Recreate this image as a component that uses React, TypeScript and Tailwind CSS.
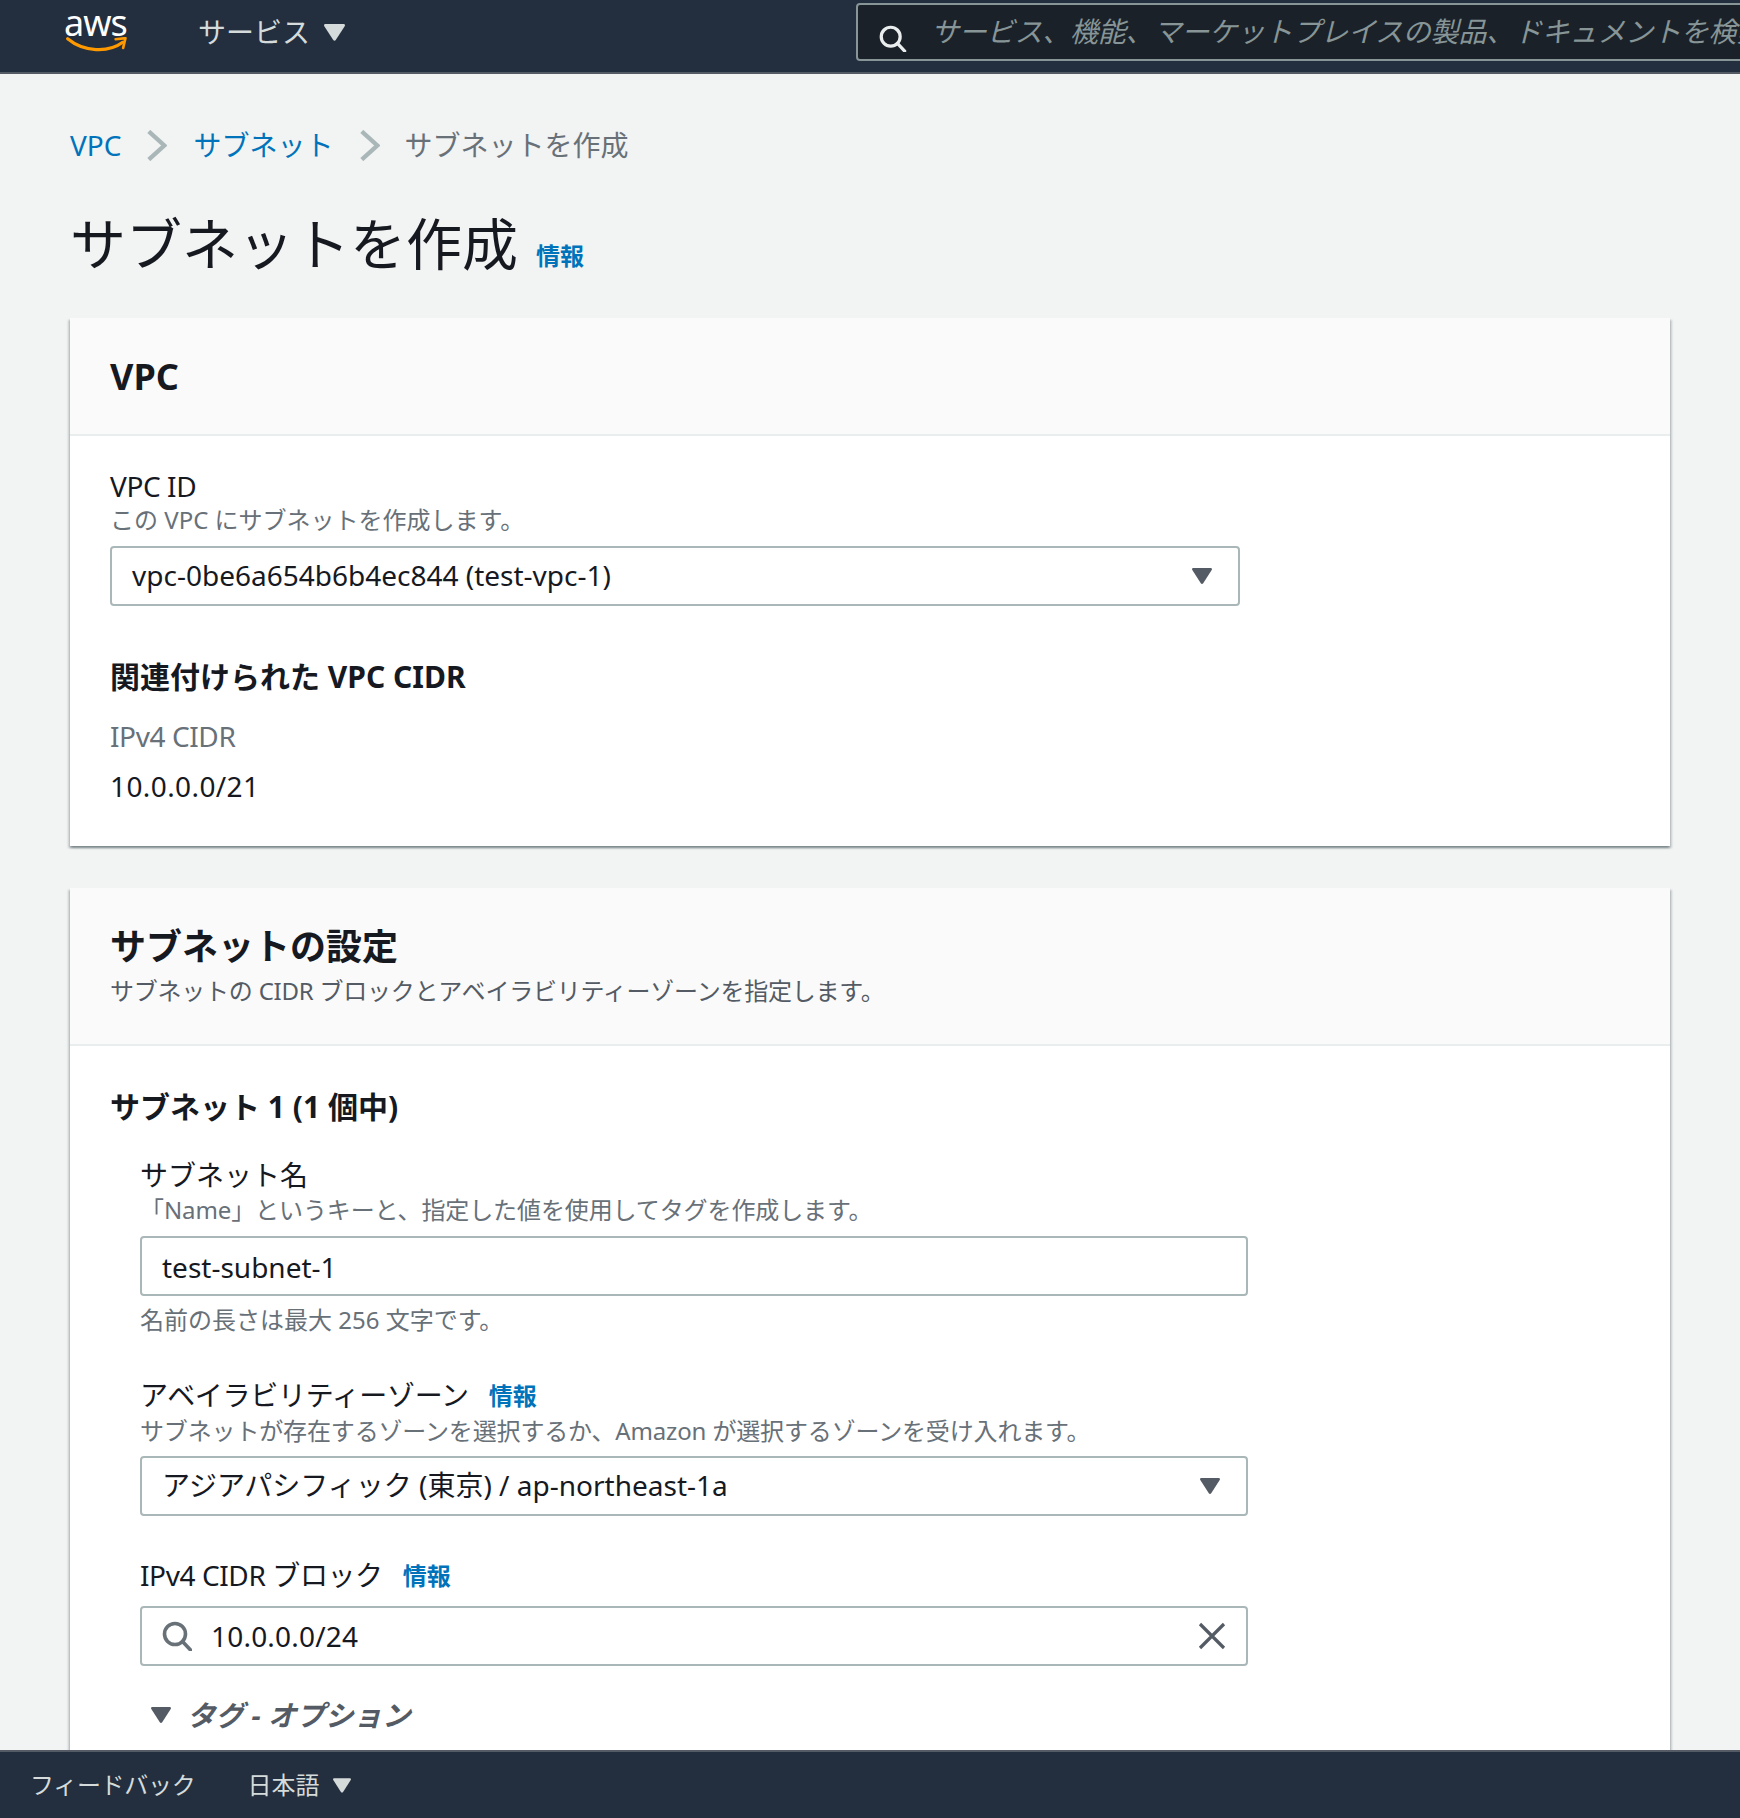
const Triangle = ({ className }: { className: string }) => (
  <svg viewBox="0 0 20 16" className={className} fill="currentColor">
    <path d="M1.5 0h17c1.2 0 1.8 1 1.2 2L11.2 15.2c-.6.9-1.8.9-2.4 0L.3 2C-.3 1 .3 0 1.5 0z" />
  </svg>
);

const Chevron = () => (
  <svg viewBox="0 0 20 32" className="h-[31px] w-[20px] text-[#aab7b8]" fill="none" stroke="currentColor" strokeWidth="4.5">
    <path d="M1.5 1.5L17.5 16 1.5 30.5" />
  </svg>
);

const SearchIcon = ({ className }: { className: string }) => (
  <svg viewBox="0 0 30 30" className={className} fill="none" stroke="currentColor" strokeWidth="3.6">
    <circle cx="13" cy="13" r="10.5" />
    <path d="M20.5 20.5L28.5 29" strokeLinecap="round" />
  </svg>
);

const Info = ({ className = "" }: { className?: string }) => (
  <a className={`text-[24px] font-bold leading-[36px] text-[#0073bb] ${className}`}>情報</a>
);

export default function App() {
  return (
    <div className="flex h-[1818px] flex-col overflow-hidden bg-[#f2f3f3] font-['Noto_Sans','Noto_Sans_CJK_JP',sans-serif] text-[28px] text-[#16191f]">
      {/* Top nav */}
      <header className="flex h-[74px] shrink-0 items-center border-b-2 border-[#545b64] bg-[#232f3e] pb-[8px]">
        <div className="relative ml-[62px] h-[64px] w-[70px] shrink-0">
          <span className="absolute left-[2px] top-[3px] text-[36px] leading-[40px] tracking-[-1px] text-white">aws</span>
          <svg viewBox="0 0 70 18" className="absolute left-0 top-[37px] h-[16px] w-[70px]" fill="none">
            <path d="M2 2c18 15 46 16 62 4" stroke="#ff9900" strokeWidth="3.6" strokeLinecap="round" />
            <path d="M56 2.5l11-1.2-2.6 11" stroke="#ff9900" strokeWidth="3" strokeLinecap="round" strokeLinejoin="round" />
          </svg>
        </div>
        <span className="ml-[66px] shrink-0 text-[#d5dbdb]">サービス</span>
        <Triangle className="ml-[14px] h-[17px] w-[21px] shrink-0 text-[#d5dbdb]" />
        <div className="ml-[511px] flex h-[58px] w-[1000px] shrink-0 items-center rounded-[4px] border-2 border-[#879596] bg-[#1a2129]">
          <SearchIcon className="ml-[20px] mt-[13px] h-[27px] w-[29px] shrink-0 text-[#eaeded]" />
          <span className="mb-[2px] ml-[24px] whitespace-nowrap italic tracking-[-0.2px] text-[#879596]">サービス、機能、マーケットプレイスの製品、ドキュメントを検索</span>
        </div>
      </header>

      <main className="min-h-0 flex-1 overflow-hidden px-[70px]">
        {/* Breadcrumbs */}
        <nav className="mt-[51px] flex h-[40px] items-center leading-[40px]">
          <a className="text-[#0073bb]">VPC</a>
          <span className="ml-[26px] mr-[26px]"><Chevron /></span>
          <a className="text-[#0073bb]">サブネット</a>
          <span className="ml-[27px] mr-[24px]"><Chevron /></span>
          <span className="text-[#687078]">サブネットを作成</span>
        </nav>

        <div className="mt-[45px] flex h-[70px] items-center">
          <h1 className="mb-[4px] text-[56px] font-normal leading-[70px]">サブネットを作成</h1>
          <Info className="ml-[18px] mt-[22px]" />
        </div>

        {/* VPC card */}
        <section className="mt-[38px] bg-white shadow-[0_2px_2px_0_rgba(0,28,36,0.3),2px_2px_2px_0_rgba(0,28,36,0.15),-2px_2px_2px_0_rgba(0,28,36,0.15)]">
          <div className="h-[118px] border-b-2 border-[#eaeded] bg-[#fafafa] px-[40px] pt-[36px]">
            <h2 className="text-[36px] font-bold leading-[46px]">VPC</h2>
          </div>
          <div className="px-[40px] pb-[40px] pt-[32px]">
            <label className="block leading-[36px] tracking-[-0.4px]">VPC ID</label>
            <p className="text-[24px] leading-[32px] text-[#687078]">この VPC にサブネットを作成します。</p>
            <div className="mt-[10px] flex h-[60px] w-[1130px] items-center justify-between rounded-[4px] border-2 border-[#aab7b8] pl-[20px] pr-[26px]">
              <span className="mb-[2px]">vpc-0be6a654b6b4ec844 (test-vpc-1)</span>
              <Triangle className="h-[16px] w-[20px] text-[#545b64]" />
            </div>
            <h3 className="mt-[51px] text-[30px] font-bold leading-[40px]">関連付けられた VPC CIDR</h3>
            <p className="mt-[19px] leading-[40px] tracking-[-0.4px] text-[#687078]">IPv4 CIDR</p>
            <p className="mt-[10px] leading-[40px] tracking-[0.4px]">10.0.0.0/21</p>
          </div>
        </section>

        {/* Subnet settings card */}
        <section className="mt-[42px] bg-white shadow-[0_2px_2px_0_rgba(0,28,36,0.3),2px_2px_2px_0_rgba(0,28,36,0.15),-2px_2px_2px_0_rgba(0,28,36,0.15)]">
          <div className="h-[158px] border-b-2 border-[#eaeded] bg-[#fafafa] px-[40px] pt-[36px]">
            <h2 className="text-[36px] font-bold leading-[46px]">サブネットの設定</h2>
            <p className="mt-[5px] text-[24px] leading-[32px] tracking-[-0.23px] text-[#545b64]">サブネットの CIDR ブロックとアベイラビリティーゾーンを指定します。</p>
          </div>
          <div className="px-[40px] pb-[100px] pt-[41px]">
            <h3 className="text-[30px] font-bold leading-[40px]">サブネット 1 (1 個中)</h3>
            <div className="pl-[30px]">
              <label className="mt-[30px] block leading-[36px]">サブネット名</label>
              <p className="mt-[1px] text-[24px] leading-[32px] tracking-[-0.1px] text-[#687078]">「Name」というキーと、指定した値を使用してタグを作成します。</p>
              <div className="mt-[10px] flex h-[60px] w-[1108px] items-center rounded-[4px] border-2 border-[#aab7b8] px-[20px] pt-[2px]">test-subnet-1</div>
              <p className="mt-[8px] text-[24px] leading-[32px] text-[#687078]">名前の長さは最大 256 文字です。</p>

              <div className="mt-[41px] flex h-[36px] items-center leading-[36px]">
                <label className="tracking-[-0.3px]">アベイラビリティーゾーン</label>
                <Info className="ml-[20px] mt-[2px]" />
              </div>
              <p className="mt-[2px] text-[24px] leading-[32px] tracking-[-0.15px] text-[#687078]">サブネットが存在するゾーンを選択するか、Amazon が選択するゾーンを受け入れます。</p>
              <div className="mt-[9px] flex h-[60px] w-[1108px] items-center justify-between rounded-[4px] border-2 border-[#aab7b8] pl-[20px] pr-[26px]">
                <span className="mb-[2px]">アジアパシフィック (東京) / ap-northeast-1a</span>
                <Triangle className="h-[16px] w-[20px] text-[#545b64]" />
              </div>

              <div className="mt-[41px] flex h-[36px] items-center leading-[36px]">
                <label className="tracking-[-0.4px]">IPv4 CIDR ブロック</label>
                <Info className="ml-[20px] mt-[2px]" />
              </div>
              <div className="mt-[13px] flex h-[60px] w-[1108px] items-center rounded-[4px] border-2 border-[#aab7b8] pl-[20px] pr-[20px]">
                <SearchIcon className="h-[30px] w-[30px] shrink-0 text-[#687078]" />
                <span className="ml-[19px] flex-1 tracking-[0.2px]">10.0.0.0/24</span>
                <svg viewBox="0 0 28 28" className="h-[28px] w-[28px] text-[#545b64]" fill="none" stroke="currentColor" strokeWidth="3.2">
                  <path d="M2 2l24 24M26 2L2 26" />
                </svg>
              </div>

              <div className="mt-[29px] flex h-[40px] items-center">
                <Triangle className="ml-[11px] h-[16px] w-[20px] text-[#545b64]" />
                <span className="ml-[16px] text-[28.5px] font-bold italic leading-[40px] text-[#545b64]">タグ - オプション</span>
              </div>
            </div>
          </div>
        </section>
      </main>

      {/* Footer */}
      <footer className="relative flex h-[68px] shrink-0 items-center border-t-2 border-[#545b64] bg-[#232f3e] pl-[30px] text-[24px] text-[#d5dbdb]">
        <span className="tracking-[-0.3px]">フィードバック</span>
        <span className="ml-[52px]">日本語</span>
        <Triangle className="ml-[14px] h-[15px] w-[18px] text-[#d5dbdb]" />
      </footer>
    </div>
  );
}
